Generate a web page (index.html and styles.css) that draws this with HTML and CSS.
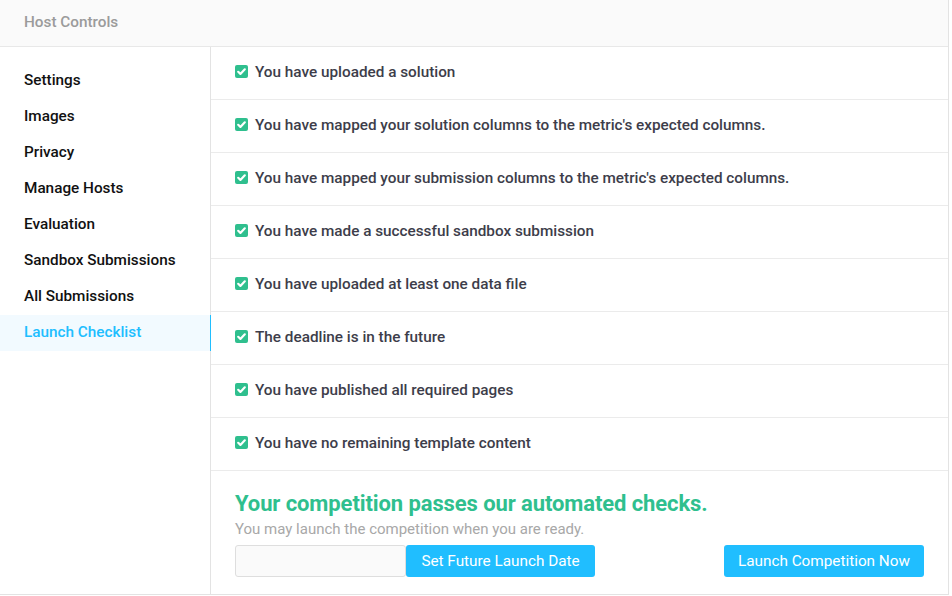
FILE: index.html
```html
<!DOCTYPE html>
<html>
<head>
<meta charset="utf-8">
<link rel="stylesheet" href="styles.css">
</head>
<body>
<div class="panel">
  <div class="header">Host Controls</div>
  <div class="content">
    <nav class="sidebar">
      <a class="nav-item">Settings</a>
      <a class="nav-item">Images</a>
      <a class="nav-item">Privacy</a>
      <a class="nav-item">Manage Hosts</a>
      <a class="nav-item">Evaluation</a>
      <a class="nav-item">Sandbox Submissions</a>
      <a class="nav-item">All Submissions</a>
      <a class="nav-item active">Launch Checklist</a>
    </nav>
    <main class="main">
      <div class="check-row"><span class="cb"><svg viewBox="0 0 13 13"><path d="M3.2 6.8 L5.4 8.9 L9.8 4.3" /></svg></span>You have uploaded a solution</div>
      <div class="check-row"><span class="cb"><svg viewBox="0 0 13 13"><path d="M3.2 6.8 L5.4 8.9 L9.8 4.3" /></svg></span>You have mapped your solution columns to the metric's expected columns.</div>
      <div class="check-row"><span class="cb"><svg viewBox="0 0 13 13"><path d="M3.2 6.8 L5.4 8.9 L9.8 4.3" /></svg></span>You have mapped your submission columns to the metric's expected columns.</div>
      <div class="check-row"><span class="cb"><svg viewBox="0 0 13 13"><path d="M3.2 6.8 L5.4 8.9 L9.8 4.3" /></svg></span>You have made a successful sandbox submission</div>
      <div class="check-row"><span class="cb"><svg viewBox="0 0 13 13"><path d="M3.2 6.8 L5.4 8.9 L9.8 4.3" /></svg></span>You have uploaded at least one data file</div>
      <div class="check-row"><span class="cb"><svg viewBox="0 0 13 13"><path d="M3.2 6.8 L5.4 8.9 L9.8 4.3" /></svg></span>The deadline is in the future</div>
      <div class="check-row"><span class="cb"><svg viewBox="0 0 13 13"><path d="M3.2 6.8 L5.4 8.9 L9.8 4.3" /></svg></span>You have published all required pages</div>
      <div class="check-row"><span class="cb"><svg viewBox="0 0 13 13"><path d="M3.2 6.8 L5.4 8.9 L9.8 4.3" /></svg></span>You have no remaining template content</div>
      <div class="launch">
        <h2 class="launch-title">Your competition passes our automated checks.</h2>
        <p class="launch-sub">You may launch the competition when you are ready.</p>
        <div class="launch-actions">
          <div class="date-group">
            <input class="date-input" type="text">
            <button class="btn">Set Future Launch Date</button>
          </div>
          <button class="btn btn-wide">Launch Competition Now</button>
        </div>
      </div>
    </main>
  </div>
</div>
</body>
</html>
```
FILE: styles.css
```css
* { box-sizing: border-box; }
body {
  margin: 0;
  background: #fff;
  font-family: Roboto, "Liberation Sans", sans-serif;
  color: #333;
}
.panel {
  width: 949px;
  border-right: 1px solid #e3e3e3;
  border-bottom: 1px solid #e3e3e3;
}
.header {
  height: 47px;
  background: #fafafa;
  border-bottom: 1px solid #e8e8e8;
  padding-left: 24px;
  font-size: 15.3px;
  line-height: 44px;
  color: #9b9b9b;
  font-weight: 500;
}
.content {
  display: flex;
}
.sidebar {
  width: 211px;
  flex: none;
  border-right: 1px solid #e3e3e3;
  padding-top: 16px;
  display: flex;
  flex-direction: column;
}
.nav-item {
  height: 36px;
  line-height: 34px;
  padding-bottom: 2px;
  padding-left: 24px;
  font-size: 15.3px;
  font-weight: 500;
  color: #111;
}
.nav-item.active {
  background: #f2faff;
  color: #20beff;
  margin-right: -1px;
  border-right: 1px solid #20beff;
}
.main {
  flex: 1;
}
.check-row {
  height: 53px;
  border-bottom: 1px solid #ebebeb;
  padding-left: 24px;
  padding-bottom: 3px;
  display: flex;
  align-items: center;
  font-size: 15.3px;
  font-weight: 500;
  color: #3d3d4a;
}
.cb {
  width: 13px;
  height: 13px;
  border-radius: 2px;
  background: #2fbf8e;
  margin-right: 7px;
  display: inline-flex;
  flex: none;
}
.cb svg {
  width: 13px;
  height: 13px;
}
.cb path {
  fill: none;
  stroke: #fff;
  stroke-width: 2.2;
  stroke-linecap: round;
  stroke-linejoin: round;
}
.launch {
  padding: 21px 24px 17px 24px;
}
.launch-title {
  margin: 0;
  font-size: 22px;
  letter-spacing: -0.1px;
  line-height: 24px;
  font-weight: 700;
  color: #2fbf8e;
}
.launch-sub {
  margin: 3px 0 6px;
  font-size: 15px;
  line-height: 20px;
  color: #a8a8a8;
}
.launch-actions {
  display: flex;
  justify-content: space-between;
}
.date-group {
  display: flex;
}
.date-input {
  width: 171px;
  height: 32px;
  border: 1px solid #dedede;
  border-radius: 3px;
  background: #fafafa;
  margin: 0;
}
.btn {
  height: 32px;
  border: none;
  border-radius: 3px;
  background: #20beff;
  color: #fff;
  font-family: Roboto, "Liberation Sans", sans-serif;
  font-size: 15.3px;
  padding: 0;
  white-space: nowrap;
  width: 189px;
}
.btn-wide {
  width: 200px;
}
```
